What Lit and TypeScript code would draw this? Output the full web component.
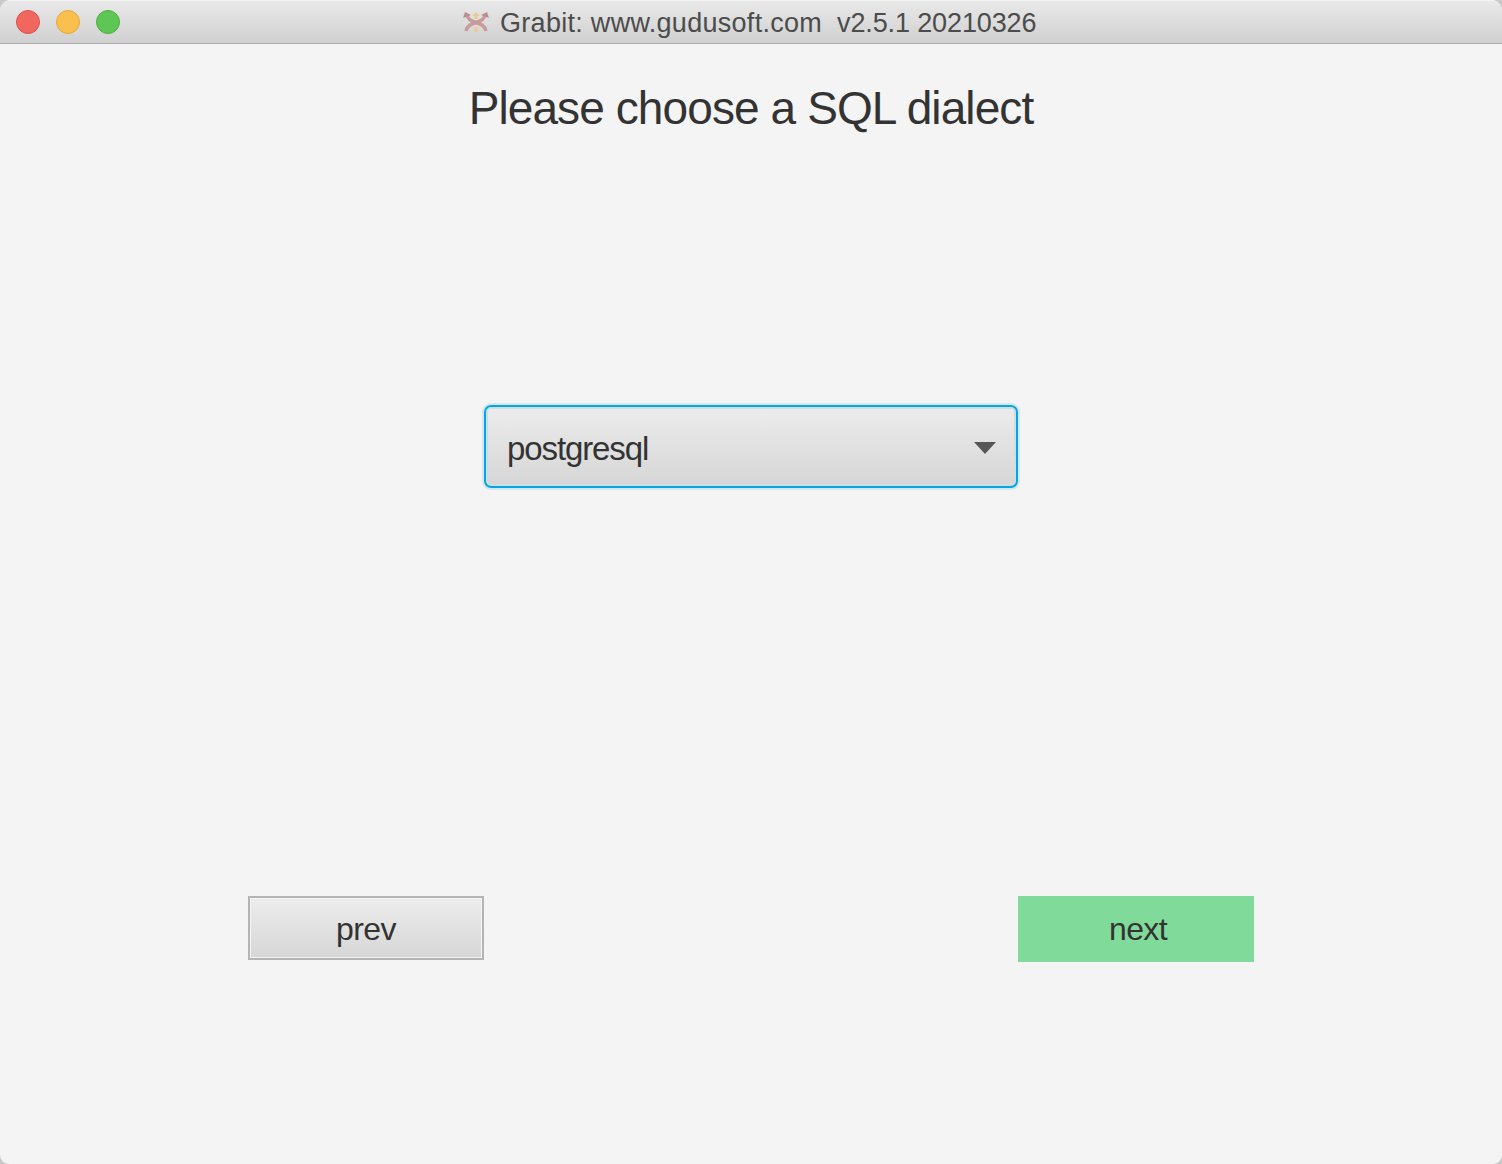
import { LitElement, html, css } from "lit";
import { customElement } from "lit/decorators.js";

@customElement("app-root")
export class AppRoot extends LitElement {
  static styles = css`
    :host {
      display: block;
      width: 1502px;
      height: 1164px;
      background: #c9c9c9;
      font-family: "Liberation Sans", Arial, sans-serif;
      color: #333;
      overflow: hidden;
    }
    .window {
      height: 100%;
      display: flex;
      flex-direction: column;
      background: #f4f4f4;
      border-radius: 11px 11px 9px 9px;
      overflow: hidden;
    }
    .titlebar {
      flex: none;
      display: flex;
      align-items: center;
      position: relative;
      background: linear-gradient(#e9e9e9, #d0d0d0);
      border-top: 1px solid #f3f3f3;
      border-bottom: 1px solid #adadad;
      box-sizing: border-box;
      height: 44px;
    }
    .lights {
      display: flex;
      gap: 16px;
      padding-left: 16px;
    }
    .light {
      width: 24px;
      height: 24px;
      border-radius: 50%;
      box-sizing: border-box;
      border: 1px solid;
    }
    .close { background: #f1675f; border-color: #dd5149; }
    .min { background: #fabf4c; border-color: #e3a73a; }
    .max { background: #5ec654; border-color: #4eae45; }
    .title {
      position: absolute;
      left: 463px;
      top: 0;
      bottom: 0;
      display: flex;
      align-items: center;
      font-size: 27px;
      color: #4c4c4c;
      white-space: pre;
    }
    .title svg { display: block; margin-right: 11px; }
    .name { padding-top: 2px; letter-spacing: 0.29px; margin-right: 15px; }
    .version { padding-top: 2px; letter-spacing: -0.13px; }
    .content {
      flex: 1;
      display: flex;
      flex-direction: column;
      align-items: center;
    }
    h1 {
      margin: 34px 0 0;
      height: 60px;
      line-height: 60px;
      font-size: 46px;
      font-weight: 400;
      letter-spacing: -0.9px;
      color: #333;
    }
    .combo {
      margin-top: 267px;
      width: 534px;
      height: 83px;
      box-sizing: border-box;
      display: flex;
      align-items: center;
      justify-content: space-between;
      padding: 4px 20px 0 21px;
      border: 2px solid #04a7de;
      border-radius: 7px;
      background: linear-gradient(#ececec, #d6d6d6);
      box-shadow: 0 0 0 2px #d3e8f0, inset 0 0 0 2px #cddde4;
      font-size: 33px;
      letter-spacing: -1.1px;
    }
    .arrow {
      width: 0;
      height: 0;
      border-left: 11px solid transparent;
      border-right: 11px solid transparent;
      border-top: 12px solid #575757;
      margin-top: -2px;
    }
    .actions {
      margin-top: 408px;
      width: 1006px;
      display: flex;
      justify-content: space-between;
      align-items: flex-start;
    }
    .btn {
      width: 236px;
      box-sizing: border-box;
      display: flex;
      align-items: center;
      justify-content: center;
      font-size: 32px;
      letter-spacing: -0.6px;
      padding: 0;
      font-family: inherit;
      color: #333;
    }
    .prev {
      height: 64px;
      border: 2px solid #b4b4b4;
      padding-top: 3px;
      background: linear-gradient(#ededed, #d6d6d6);
      box-shadow: inset 0 0 0 1px #f4f4f4;
    }
    .next {
      height: 66px;
      border: none;
      background: #80db9b;
      padding: 1px 0 0 4px;
    }
  `;

  render() {
    return html`
      <div class="window">
        <div class="titlebar">
          <div class="lights">
            <span class="light close"></span>
            <span class="light min"></span>
            <span class="light max"></span>
          </div>
          <div class="title">
            <svg width="26" height="22" viewBox="0 0 26 22" fill="none">
              <path d="M3 20C4 14 9 12.500 13 11.500S21 9 22 4" stroke="#c99a9a" stroke-width="3.500"/>
              <path d="M23 20C22 14 17 12.500 13 11.500S5 9 4 4" stroke="#c99a9a" stroke-width="3.500"/>
              <path d="M0 7l2-6 6 3zM26 7l-2-6-6 3z" fill="#b88f8f"/>
              <path d="M13 5v3M13 16v5" stroke="#ecc98c" stroke-width="3"/>
              <path d="M13 1l3.500 4h-7z" fill="#ecc98c"/>
            </svg>
            <span class="name">Grabit: www.gudusoft.com</span>
            <span class="version">v2.5.1 20210326</span>
          </div>
        </div>
        <div class="content">
          <h1>Please choose a SQL dialect</h1>
          <div class="combo">
            <span>postgresql</span>
            <span class="arrow"></span>
          </div>
          <div class="actions">
            <button class="btn prev">prev</button>
            <button class="btn next">next</button>
          </div>
        </div>
      </div>
    `;
  }
}
